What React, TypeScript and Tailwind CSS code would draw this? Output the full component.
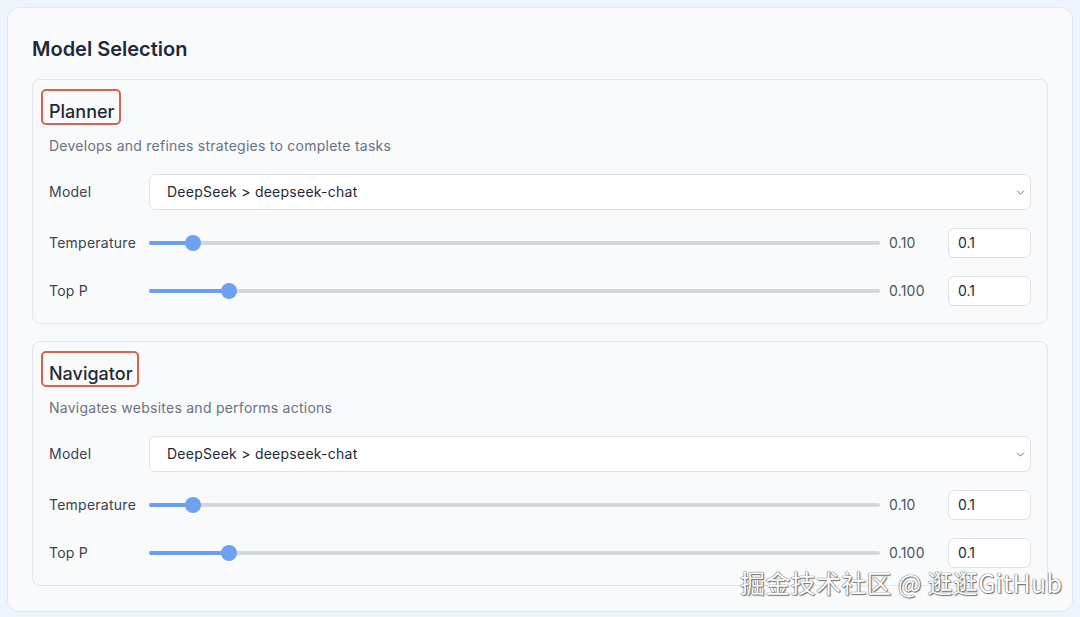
import { ChevronDown } from 'lucide-react';

type Agent = {
  name: string;
  desc: string;
  model: string;
  temperature: number;
  topP: number;
};

const agents: Agent[] = [
  {
    name: "Planner",
    desc: "Develops and refines strategies to complete tasks",
    model: "DeepSeek > deepseek-chat",
    temperature: 0.1,
    topP: 0.1
  },
  {
    name: "Navigator",
    desc: "Navigates websites and performs actions",
    model: "DeepSeek > deepseek-chat",
    temperature: 0.1,
    topP: 0.1
  }
];

// thumb is 16px wide, so it travels the track minus its own width
function Slider({ value, max }: { value: number; max: number }) {
  const frac = value / max;
  return (
    <div className="relative h-4 flex-1">
      <div className="absolute left-0 right-0 top-1/2 h-1 -translate-y-1/2 rounded-full bg-[#d4d7dd]" />
      <div
        className="absolute left-0 top-1/2 h-1 -translate-y-1/2 rounded-full bg-[#6b9ef2]"
        style={{ width: `calc(8px + (100% - 16px) * ${frac})` }}
      />
      <div
        className="absolute top-0 h-4 w-4 rounded-full bg-[#6fa1f3]"
        style={{ left: `calc((100% - 16px) * ${frac})` }}
      />
    </div>
  );
}

function ParamRow({ label, value, max, shown }: { label: string; value: number; max: number; shown: string }) {
  return (
    <div className="flex h-[30px] items-center">
      <span className="w-[100px] text-sm tracking-[0.25px] text-[#3b4250]">{label}</span>
      <Slider value={value} max={max} />
      <span className="ml-[9px] w-[59px] text-sm tracking-[0.2px] text-[#4b5563]">{shown}</span>
      <div className="flex h-[30px] w-[83px] items-center rounded-md border border-[#dfe2e7] bg-white pl-[9px] text-sm text-[#1f2937]">
        {value}
      </div>
    </div>
  );
}

function AgentCard({ agent }: { agent: Agent }) {
  return (
    <div className="rounded-lg border border-[#e4e7ec] bg-[#f9fafb] px-4 pt-[18px] pb-[17px]">
      <h3 className="relative inline-block text-lg leading-7 font-medium text-[#1f2937]">
        {agent.name}
        <span className="absolute -top-[9px] -right-1.5 bottom-px -left-2 rounded-[5px] border-2 border-[#dc614f]" />
      </h3>
      <p className="mt-[10px] text-sm tracking-[0.25px] text-[#6b7280]">{agent.desc}</p>

      <div className="mt-[18px] flex flex-col gap-[18px]">
        <div className="flex h-9 items-center">
          <span className="w-[100px] text-sm tracking-[0.25px] text-[#3b4250]">Model</span>
          <div className="flex h-9 flex-1 items-center justify-between rounded-md border border-[#dfe2e7] bg-white pr-[3px] pl-[17px] text-sm tracking-[0.25px] text-[#1f2937]">
            <span>{agent.model}</span>
            <ChevronDown size={13} strokeWidth={1.5} className="text-[#4b5563]" />
          </div>
        </div>
        <ParamRow label="Temperature" value={agent.temperature} max={2} shown={agent.temperature.toFixed(2)} />
        <ParamRow label="Top P" value={agent.topP} max={1} shown={agent.topP.toFixed(3)} />
      </div>
    </div>
  );
}

export default function App() {
  return (
    <div className="relative min-h-screen bg-[#edf4fb] p-[7px] font-['Inter','Noto_Sans',sans-serif]">
      <div className="rounded-xl border border-[#e2e7ee] bg-[#f8fafc] px-6 pt-[27px] pb-[25px]">
        <h2 className="mb-[16px] text-xl leading-7 font-semibold text-[#1f2937]">Model Selection</h2>
        <div className="flex flex-col gap-[17px]">
          {agents.map((a) => (
            <AgentCard key={a.name} agent={a} />
          ))}
        </div>
      </div>

      <div className="absolute top-[566px] left-[740px] font-['Noto_Sans_CJK_SC','Noto_Sans',sans-serif] text-[25px] leading-8 tracking-[0.3px] text-white [text-shadow:0_0_1px_#555,0_0_1px_#555,1px_1px_1px_#777]">
        掘金技术社区 @ 逛逛GitHub
      </div>
    </div>
  );
}
